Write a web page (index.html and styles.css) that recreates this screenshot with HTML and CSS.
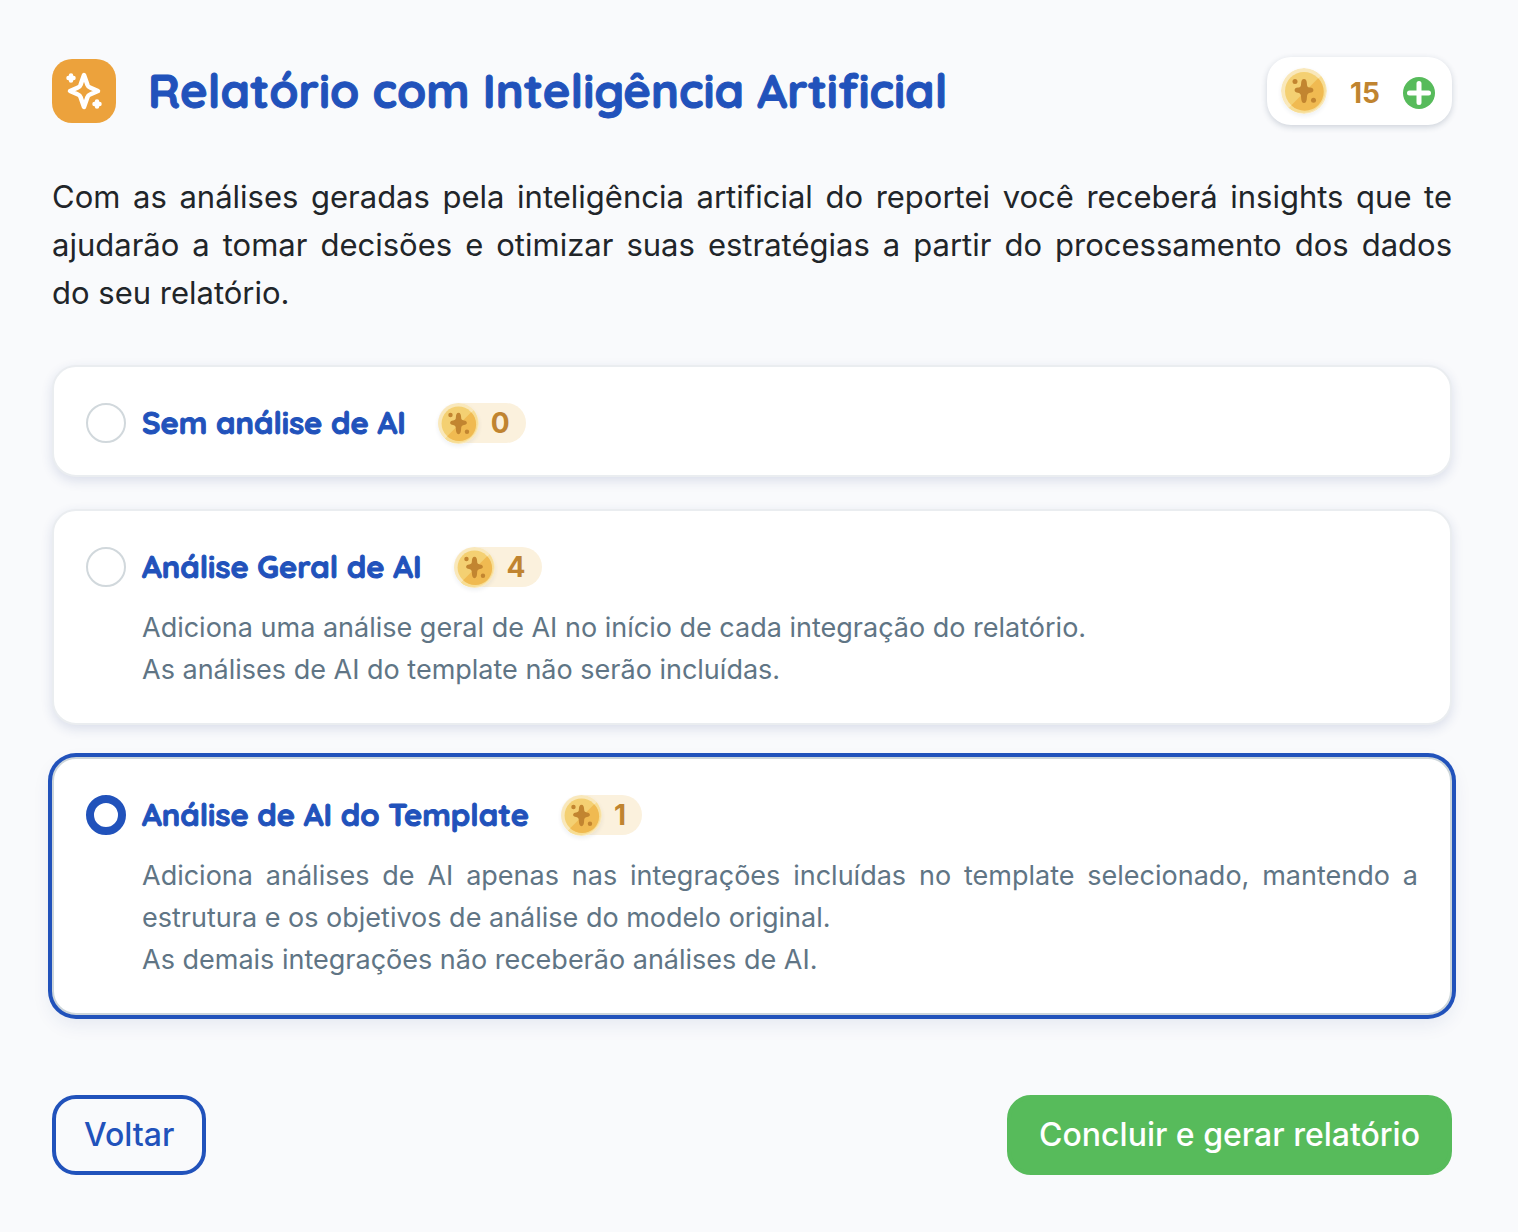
FILE: index.html
```html
<!DOCTYPE html>
<html lang="pt-BR">
  <head>
    <meta charset="utf-8">
    <meta name="viewport" content="width=device-width, initial-scale=1.0">

    <title>Relatório com Inteligência Artificial</title>

    <link rel="stylesheet" href="styles.css">
  </head>

  <body>
    <!-- shared coin drawing -->
    <svg class="sprite" aria-hidden="true">
      <symbol id="coin" viewBox="0 0 46 46">
        <circle cx="23" cy="23" r="23" fill="#f9e8bb"/>
        <path d="M7.5 40 L40 8 A23 23 0 0 1 7.5 40 Z" fill="#f7dd94"/>
        <circle cx="23" cy="23" r="19" fill="#f4d072"/>
        <path d="M10.3 37.2 L37.2 10.3 A19 19 0 0 1 10.3 37.2 Z" fill="#f0ba51"/>
        <path d="M23 11 C25 11 25.8 13 25.9 15.500 C26 18.500 26.500 19.300 29 19.600 C31.200 19.900 32.400 20.700 32.400 22.200 C32.400 23.800 31 24.500 29 24.800 C26.600 25.200 26 26.500 25.900 29.500 C25.800 33 25 35 23 35 C21 35 20.200 33 20.100 29.500 C20 26.500 19.400 25.200 17 24.800 C15 24.500 13.600 23.800 13.600 22.200 C13.600 20.700 14.800 19.900 17 19.600 C19.500 19.300 20 18.500 20.100 15.500 C20.200 13 21 11 23 11 Z" fill="#c28530"/>
        <circle cx="14" cy="13.500" r="2.500" fill="#c28530"/>
        <circle cx="32.500" cy="32.200" r="2.500" fill="#c28530"/>
      </symbol>
    </svg>

    <main class="page">
      <header class="header">
        <svg class="headerIcon" viewBox="0 0 64 64" aria-hidden="true">
          <rect width="64" height="64" rx="20" fill="#eca23c"/>
          <g fill="none" stroke="#fff" stroke-width="4.500" stroke-linecap="round" stroke-linejoin="round">
            <path d="M32 16 L35.500 26 Q36.200 27.800 38 28.500 L46 32 L38 35.500 Q36.200 36.200 35.500 38 L32 48 L28.500 38 Q27.800 36.200 26 35.500 L18 32 L26 28.500 Q27.800 27.800 28.500 26 Z"/>
            <path d="M19 16.500 V21.500 M16.500 19 H21.500 M45 42.500 V47.500 M42.500 45 H47.500"/>
          </g>
        </svg>
        <h1 class="title">Relatório com Inteligência Artificial</h1>

        <div class="credits">
          <svg class="coin"><use href="#coin"/></svg>
          <span class="creditsValue">15</span>
          <button type="button" class="addButton" aria-label="Adicionar créditos">
            <svg viewBox="0 0 32 32" aria-hidden="true">
              <circle cx="16" cy="16" r="16" fill="#57bb5b"/>
              <path d="M16 6.500 V25.500 M6.500 16 H25.500" stroke="#fff" stroke-width="5" stroke-linecap="round"/>
            </svg>
          </button>
        </div>
      </header>

      <p class="intro">Com as análises geradas pela inteligência artificial do reportei você receberá insights que te ajudarão a tomar decisões e otimizar suas estratégias a partir do processamento dos dados do&nbsp;seu relatório.</p>

      <form>
        <div class="options">
          <label class="option">
            <input type="radio" name="analysis" value="none">
            <span class="optionTitle">Sem análise de AI</span>
            <span class="chip"><svg class="coin"><use href="#coin"/></svg>0</span>
          </label>

          <label class="option">
            <input type="radio" name="analysis" value="general">
            <span class="optionTitle">Análise Geral de AI</span>
            <span class="chip"><svg class="coin"><use href="#coin"/></svg>4</span>
            <span class="optionText">Adiciona uma análise geral de AI no início de cada integração do relatório.<br>As análises de AI do template não serão incluídas.</span>
          </label>

          <label class="option">
            <input type="radio" name="analysis" value="template" checked>
            <span class="optionTitle">Análise de AI do Template</span>
            <span class="chip"><svg class="coin"><use href="#coin"/></svg>1</span>
            <span class="optionText">Adiciona análises de AI apenas nas integrações incluídas no template selecionado, mantendo a estrutura e os objetivos de análise do modelo original.<br>As demais integrações não receberão análises de AI.</span>
          </label>
        </div>

        <div class="actions">
          <button type="button" class="button buttonBack">Voltar</button>
          <button type="submit" class="button buttonSubmit">Concluir e gerar relatório</button>
        </div>
      </form>
    </main>
  </body>
</html>
```

FILE: styles.css
```css
* {
  box-sizing: border-box;
}

body {
  margin: 0;
  font-family: Inter, "Liberation Sans", sans-serif;
  font-size: 31px;
  line-height: 48px;
  background: #f9fafc;
  color: #212529;
}

.sprite {
  display: none;
}

.page {
  padding: 57px 66px 56px 52px;
}

.header {
  display: flex;
  align-items: center;
}

.headerIcon {
  width: 64px;
  height: 64px;
  margin-right: 32px;
}

.title,
.optionTitle {
  font-family: Quicksand, Lato, sans-serif;
  font-weight: bold;
  color: #2152bb;
  -webkit-text-stroke: 1px #2152bb;
}

.title {
  margin: 0;
  font-size: 47px;
}

.credits {
  display: flex;
  align-items: center;
  justify-content: space-between;
  width: 185px;
  height: 68px;
  margin-left: auto;
  padding: 0 17px 0 14px;
  border-radius: 24px;
  background: white;
  box-shadow: 0 2px 6px rgba(30, 50, 80, .2);
}

.coin {
  width: 46px;
  height: 46px;
  border-radius: 50%;
  box-shadow: 0 2px 4px rgba(30, 50, 80, .08);
}

.creditsValue,
.chip {
  font-size: 28px;
  font-weight: 700;
  color: #c08430;
}

.creditsValue,
.addButton {
  margin-top: 4px;
}

.addButton {
  width: 32px;
  height: 32px;
  padding: 0;
  border: none;
  background: none;
}

.addButton svg {
  display: block;
}

.intro {
  margin: 48px 0;
  text-align: justify;
}

.options {
  display: flex;
  flex-direction: column;
  gap: 32px;
}

.option {
  display: grid;
  grid-template-columns: 40px auto 1fr;
  align-items: center;
  column-gap: 16px;
  row-gap: 20px;
  padding: 36px 32px 32px;
  border: 2px solid #eaedf0;
  border-radius: 24px;
  background: white;
  box-shadow: 0 4px 12px rgba(33, 60, 130, .14);
}

.option:has(input:checked) {
  border-color: #cdd6da;
  box-shadow: 0 0 0 4px #2152bb, 0 8px 20px rgba(33, 60, 130, .1);
}

.option input {
  appearance: none;
  width: 40px;
  height: 40px;
  margin: 0;
  border: 2px solid #d1d8dc;
  border-radius: 50%;
  background: white;
}

.option input:checked {
  border: 8px solid #2152bb;
}

.optionTitle {
  font-size: 31px;
  line-height: 40px;
}

.chip {
  display: flex;
  align-items: center;
  justify-self: start;
  gap: 12px;
  height: 40px;
  margin-left: 16px;
  padding-right: 16px;
  border-radius: 20px;
  background: #fbf1dd;
}

.chip .coin {
  width: 41px;
  height: 41px;
}

.optionText {
  grid-column: 2 / -1;
  font-size: 27px;
  line-height: 42px;
  text-align: justify;
  color: #607585;
}

.actions {
  display: flex;
  justify-content: space-between;
  margin-top: 80px;
}

.button {
  height: 80px;
  padding: 0 28px;
  border: 4px solid;
  border-radius: 24px;
  font: inherit;
  font-size: 32px;
  font-weight: 500;
}

.buttonBack {
  border-color: #2152bb;
  background: none;
  color: #2152bb;
}

.buttonSubmit {
  border-color: #57bb5b;
  background: #57bb5b;
  color: white;
}
```
